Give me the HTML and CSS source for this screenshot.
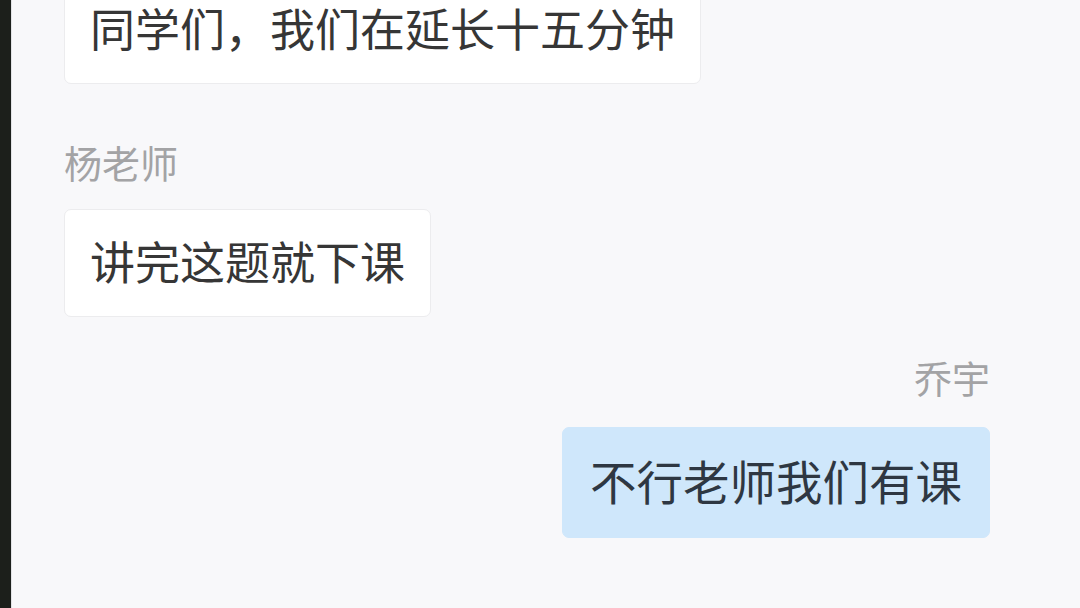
FILE: index.html
```html
<!DOCTYPE html>
<html lang="zh-CN">
<head>
    <meta charset="UTF-8">
    <meta name="viewport" content="width=device-width, initial-scale=1.0">
    <title>课堂群聊</title>
    <link rel="stylesheet" href="styles.css">
</head>
<body>
    <div class="app">
        <div class="sidebar"></div>
        <div class="chat">
            <div class="message-list">
                <!-- earlier message, scrolled partly out of view -->
                <div class="msg">
                    <div class="bubble">同学们，我们在延长十五分钟</div>
                </div>

                <div class="msg">
                    <div class="name">杨老师</div>
                    <div class="bubble">讲完这题就下课</div>
                </div>

                <div class="msg mine">
                    <div class="name">乔宇</div>
                    <div class="bubble">不行老师我们有课</div>
                </div>
            </div>
        </div>
    </div>
</body>
</html>
```

FILE: styles.css
```css
body {
    margin: 0;
    padding: 0;
    font-family: "Noto Sans CJK SC", "Noto Sans", sans-serif;
    background-color: #f8f8fa;
    overflow: hidden;
}
.app {
    display: flex;
    height: 608px;
}
.sidebar {
    width: 11px;
    background-color: #1c1f1b;
    border-right: 1px solid #e2e3e5;
}
.chat {
    flex: 1;
    padding: 0 90px 0 52px;
}
.message-list {
    display: flex;
    flex-direction: column;
    margin-top: -24px;
}
.msg {
    display: flex;
    flex-direction: column;
    align-items: flex-start;
}
.msg + .msg {
    margin-top: 49px;
}
.msg.mine {
    align-items: flex-end;
    margin-top: 31px;
}
.name {
    font-size: 38px;
    line-height: 57px;
    color: #a3a3a5;
    margin-bottom: 19px;
}
.msg.mine .name {
    margin-bottom: 22px;
}
.bubble {
    font-size: 45px;
    line-height: 50px;
    padding: 26px 25px 30px;
    color: #363636;
    background-color: #ffffff;
    border: 1px solid #ececee;
    border-radius: 7px;
}
.msg.mine .bubble {
    font-size: 46.5px;
    padding: 27px 27px 32px;
    color: #2e3742;
    background-color: #cfe7fb;
    border-color: #cfe7fb;
}
```
